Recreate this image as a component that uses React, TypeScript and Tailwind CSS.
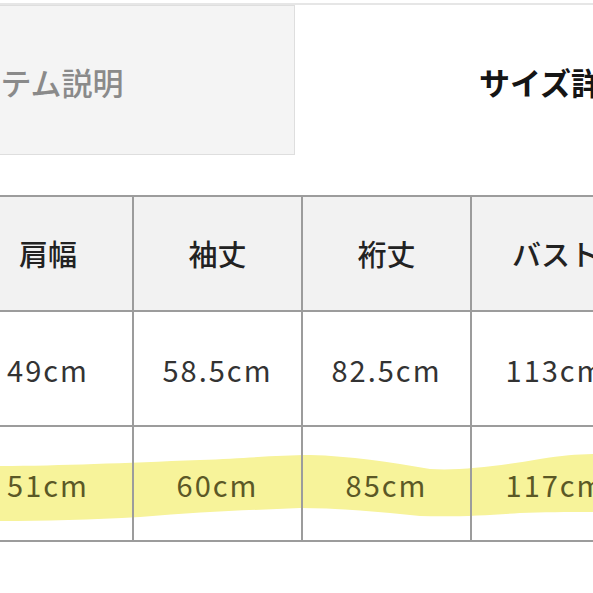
import React from "react";

const font = { fontFamily: '"Noto Sans CJK JP", "Noto Sans", sans-serif' };

export default function App() {
  const headers = ["肩幅", "袖丈", "裄丈", "バスト"];
  const row1 = ["49cm", "58.5cm", "82.5cm", "113cm"];
  const row2 = ["51cm", "60cm", "85cm", "117cm"];
  return (
    <div className="relative w-[593px] h-[593px] overflow-hidden bg-white" style={font}>
      <svg
        className="absolute left-0 top-0"
        width="593"
        height="593"
        viewBox="0 0 593 593"
      >
        <path
          d="M-5 466 C 60 466, 120 463, 200 460 C 250 458, 280 455, 310 455 C 350 456, 390 462, 430 469 C 460 471, 500 466, 540 459 C 565 455, 580 454, 600 454 L 600 512 C 570 512, 545 512, 520 513 C 490 515, 460 517, 420 516 C 380 512, 340 508, 300 508 C 250 510, 200 512, 140 517 C 90 520, 40 521, -5 521 Z"
          fill="#f7f39a"
        />
      </svg>
      <div className="relative">
        <div className="mt-[3px] h-[2px] bg-[#e6e6e6]" />
        <div className="flex">
          <div className="ml-[-235px] w-[530px] h-[150px] shrink-0 bg-[#f4f4f4] border border-[#dedede] flex items-center justify-center pt-[4px]">
            <span className="text-[31px] font-medium text-[#8a8a8a] ml-[4px]">アイテム説明</span>
          </div>
          <div className="w-[530px] h-[150px] shrink-0 flex items-center justify-center pt-[4px]">
            <span className="text-[31px] font-bold text-[#151515] mr-[8px]">サイズ詳細</span>
          </div>
        </div>
        <div className="mt-[40px] ml-[-36px] w-[678px] border-t-2 border-[#9c9c9c] grid grid-cols-[170px_169px_169px_169px]">
          {headers.map((h) => (
            <div
              key={h}
              className="h-[115px] bg-[#f2f2f2] border-r-2 border-b-2 border-[#9c9c9c] flex items-center justify-center"
            >
              <span className="text-[29px] font-medium text-[#222]">{h}</span>
            </div>
          ))}
          {row1.map((v) => (
            <div
              key={v}
              className="h-[115px] border-r-2 border-b-2 border-[#9c9c9c] flex items-center justify-center pt-[2px]"
            >
              <span className="text-[29px] text-[#333] tracking-[2px]">{v}</span>
            </div>
          ))}
          {row2.map((v) => (
            <div
              key={v}
              className="h-[115px] border-r-2 border-b-2 border-[#9c9c9c] flex items-center justify-center pt-[2px]"
            >
              <span className="text-[29px] text-[#5b5826] tracking-[2px]">{v}</span>
            </div>
          ))}
        </div>
      </div>
    </div>
  );
}
